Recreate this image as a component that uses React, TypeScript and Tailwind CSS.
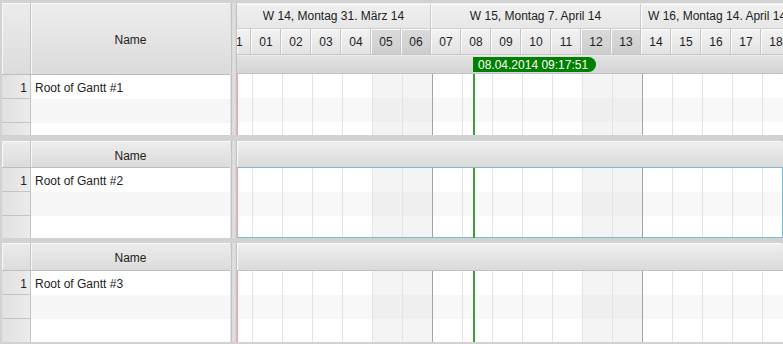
import React from 'react';

const DAYS = ['31', '01', '02', '03', '04', '05', '06', '07', '08', '09', '10', '11', '12', '13', '14', '15', '16', '17', '18'];
const WEEKEND = ['05', '06', '12', '13'];
const WEEK_END = ['06', '13'];

const DayCell: React.FC<{ day: string; first: boolean }> = ({ day, first }) => {
  const we = WEEKEND.includes(day);
  return (
    <div
      className={`flex shrink-0 items-center overflow-hidden border-r border-[#c6c6c6] shadow-[inset_1px_1px_0_#fbfbfb] ${
        first ? 'w-[14px]' : 'w-[30px]'
      } ${we ? 'bg-gradient-to-b from-[#dbdbdb] to-[#cdcdcd]' : 'bg-gradient-to-b from-[#f3f3f3] to-[#e3e3e3]'}`}
    >
      <div className={`w-[30px] shrink-0 text-center ${first ? 'ml-[-16px]' : ''}`}>{day}</div>
    </div>
  );
};

const BodyRow: React.FC<{ stripe: boolean }> = ({ stripe }) => (
  <div className="flex h-[24px] shrink-0">
    {DAYS.map((d, i) => {
      const we = WEEKEND.includes(d);
      const bg = stripe ? (we ? 'bg-[#efefef]' : 'bg-[#f8f8f8]') : we ? 'bg-[#f4f4f4]' : 'bg-white';
      const line = WEEK_END.includes(d) ? 'border-[#a3a3a3]' : 'border-[#e3e3e3]';
      return <div key={i} className={`shrink-0 border-r ${line} ${bg} ${i === 0 ? 'w-[15px]' : 'w-[30px]'}`} />;
    })}
  </div>
);

const LeftTable: React.FC<{ name: string; head: string }> = ({ name, head }) => (
  <div className="flex w-[229px] shrink-0 flex-col overflow-hidden border-r border-[#e2e2e2]">
    <div className={`flex shrink-0 border-b border-[#bdbdbd] shadow-[0_1px_2px_#c8c8c8] ${head}`}>
      <div className="w-[29px] shrink-0 border-r border-[#c4c4c4] bg-gradient-to-b from-[#ececec] to-[#dcdcdc] shadow-[inset_1px_1px_0_#f8f8f8]" />
      <div className="flex flex-1 items-center justify-center bg-gradient-to-b from-[#ededed] to-[#dbdbdb] pt-[3px] shadow-[inset_1px_1px_0_#f8f8f8]">
        Name
      </div>
    </div>
    {[0, 1, 2].map((r) => (
      <div key={r} className="flex h-[24px] shrink-0">
        <div className="flex w-[29px] shrink-0 items-center justify-end border-r border-b border-[#c4c4c4] bg-gradient-to-r from-[#e0e0e0] to-[#ececec] pt-[2px] pr-[3px]">
          {r === 0 ? '1' : ''}
        </div>
        <div className={`flex flex-1 items-center pt-[2px] pl-[4px] ${r === 1 ? 'bg-[#f7f7f7]' : 'bg-white'}`}>
          {r === 0 ? name : ''}
        </div>
      </div>
    ))}
  </div>
);

const Splitter = () => (
  <div className="w-[6px] shrink-0 border-x border-[#c2c2c2] bg-gradient-to-r from-[#d8d8d8] via-[#e2e2e2] to-[#d4d4d4]" />
);

const Body: React.FC<{ focused?: boolean }> = ({ focused }) => (
  <div
    className={`flex flex-1 flex-col overflow-hidden border-l border-[#f2a2a8] ${
      focused ? 'border-t border-r border-b border-t-[#79bccb] border-r-[#79bccb] border-b-[#79bccb]' : ''
    }`}
  >
    <BodyRow stripe={false} />
    <BodyRow stripe />
    <BodyRow stripe={false} />
  </div>
);

const TodayLine: React.FC<{ top: string }> = ({ top }) => (
  <div className={`absolute left-[236px] bottom-0 w-[2px] bg-[#3e9e3e] ${top}`} />
);

const TimelinePanel = () => (
  <div className="flex h-[132px]">
    <LeftTable name="Root of Gantt #1" head="h-[72px]" />
    <Splitter />
    <div className="relative flex w-[546px] shrink-0 flex-col overflow-hidden">
      <div className="flex h-[26px] shrink-0 border-b border-[#cfcfcf] bg-gradient-to-b from-[#f0f0f0] to-[#e7e7e7] pt-[1px]">
        <div className="flex w-[194px] shrink-0 items-center justify-center border-r border-[#cdcdcd] shadow-[inset_0_1px_0_#fafafa] whitespace-nowrap">
          W 14, Montag 31. März 14
        </div>
        <div className="flex w-[210px] shrink-0 items-center justify-center border-r border-[#cdcdcd] shadow-[inset_1px_1px_0_#fafafa] whitespace-nowrap">
          W 15, Montag 7. April 14
        </div>
        <div className="flex w-[210px] shrink-0 items-center pl-[7px] shadow-[inset_1px_1px_0_#fafafa] whitespace-nowrap">
          W 16, Montag 14. April 14
        </div>
      </div>
      <div className="flex h-[26px] shrink-0 border-b border-[#c4c4c4]">
        {DAYS.map((d, i) => (
          <DayCell key={i} day={d} first={i === 0} />
        ))}
      </div>
      <div className="h-[19px] shrink-0 border-b border-[#c0c0c0] bg-gradient-to-b from-[#e2e2e2] to-[#d5d5d5] shadow-[inset_0_1px_0_#ececec]" />
      <Body />
      <TodayLine top="top-[71px]" />
      <div className="absolute left-[236px] top-[54px] flex h-[15px] w-[123px] items-center rounded-r-full bg-[#008000] pl-[5px] text-white whitespace-nowrap">
        08.04.2014 09:17:51
      </div>
    </div>
  </div>
);

const PlainPanel: React.FC<{ name: string; height: string; head: string; bar: string; focused?: boolean; lineTop: string }> = ({
  name,
  height,
  head,
  bar,
  focused,
  lineTop,
}) => (
  <div className={`flex ${height}`}>
    <LeftTable name={name} head={head} />
    <Splitter />
    <div className="relative flex w-[546px] shrink-0 flex-col overflow-hidden">
      <div
        className={`shrink-0 rounded-tr-[3px] bg-gradient-to-b from-[#efefef] to-[#dadada] shadow-[inset_1px_1px_0_#fafafa] ${bar} ${
          focused ? '' : 'border-b border-[#c2c2c2]'
        }`}
      />
      <Body focused={focused} />
      <TodayLine top={lineTop} />
    </div>
  </div>
);

export default function App() {
  return (
    <div className="h-[344px] w-[783px] overflow-hidden bg-[#d2d2d2] pl-[2px] pt-[3px] font-['Liberation_Sans',Arial,sans-serif] text-[12px] text-[#222]">
      <TimelinePanel />
      <div className="mt-[6px]">
        <PlainPanel name="Root of Gantt #2" height="h-[97px]" head="h-[27px]" bar="h-[26px]" focused lineTop="top-[27px]" />
      </div>
      <div className="mt-[5px]">
        <PlainPanel name="Root of Gantt #3" height="h-[99px]" head="h-[28px]" bar="h-[28px]" lineTop="top-[28px]" />
      </div>
    </div>
  );
}
